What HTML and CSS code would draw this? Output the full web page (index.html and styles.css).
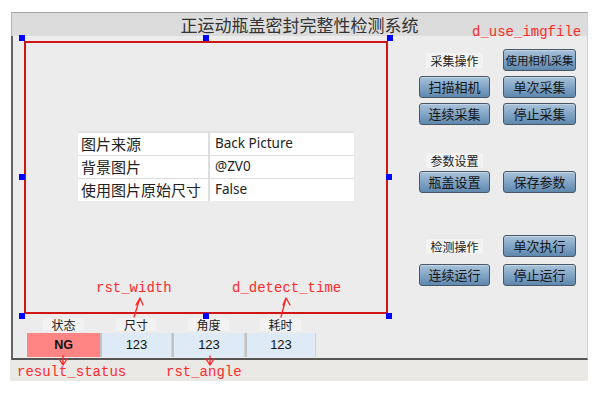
FILE: index.html
```html
<!DOCTYPE html>
<html>
<head>
<meta charset="utf-8">
<link rel="stylesheet" href="styles.css">
</head>
<body>
<div class="screen">
  <div class="window">
    <div class="titlebar">正运动瓶盖密封完整性检测系统</div>
    <div class="body">
      <div class="main">
        <div class="roi">
          <span class="h h-tl"></span><span class="h h-tm"></span><span class="h h-tr"></span>
          <span class="h h-ml"></span><span class="h h-mr"></span>
          <span class="h h-bl"></span><span class="h h-bm"></span><span class="h h-br"></span>
          <div class="props">
            <div class="prow"><div class="k">图片来源</div><div class="v">Back Picture</div></div>
            <div class="prow"><div class="k">背景图片</div><div class="v">@ZV0</div></div>
            <div class="prow"><div class="k">使用图片原始尺寸</div><div class="v">False</div></div>
          </div>
        </div>
        <div class="results">
          <div class="res"><span class="lbl">状态</span><div class="val ng">NG</div></div>
          <div class="res"><span class="lbl">尺寸</span><div class="val">123</div></div>
          <div class="res"><span class="lbl">角度</span><div class="val">123</div></div>
          <div class="res"><span class="lbl">耗时</span><div class="val">123</div></div>
        </div>
      </div>
      <div class="side">
        <div class="grp g1">
          <span class="glabel">采集操作</span>
          <button class="btn small">使用相机采集</button>
          <button class="btn">扫描相机</button>
          <button class="btn">单次采集</button>
          <button class="btn">连续采集</button>
          <button class="btn">停止采集</button>
        </div>
        <div class="grp g2">
          <span class="glabel">参数设置</span>
          <span></span>
          <button class="btn">瓶盖设置</button>
          <button class="btn">保存参数</button>
        </div>
        <div class="grp g3">
          <span class="glabel">检测操作</span>
          <button class="btn">单次执行</button>
          <button class="btn">连续运行</button>
          <button class="btn">停止运行</button>
        </div>
      </div>
    </div>
  </div>
  <div class="band"></div>

  <span class="note n-img">d_use_imgfile</span>
  <span class="note n-width">rst_width</span>
  <span class="note n-time">d_detect_time</span>
  <span class="note n-status">result_status</span>
  <span class="note n-angle">rst_angle</span>

  <svg class="arrows" width="598" height="396" viewBox="0 0 598 396">
    <g fill="none" stroke="#ff2020" stroke-width="1.3" stroke-linecap="round" stroke-linejoin="round">
      <path d="M134 317 L140 298 M136 305 L140 298 L143 305"/>
      <path d="M281 317 L286 298 M283 305 L286 298 L290 305"/>
      <path d="M63 356 L63 365 M59 359 L63 365 L67 359"/>
      <path d="M210 356 L210 365 M206 359 L210 365 L214 359"/>
    </g>
  </svg>
</div>
</body>
</html>
```

FILE: styles.css
```css
html, body {
  margin: 0;
  padding: 0;
  background: #ffffff;
}

.screen {
  position: relative;
  width: 598px;
  height: 396px;
  box-sizing: border-box;
  padding: 12px 0 0 11px;
  font-family: "Noto Sans CJK SC", "Noto Sans", sans-serif;
  overflow: hidden;
}

.window {
  width: 577px;
}

.titlebar {
  height: 23px;
  border-top: 1px solid #a3a3a3;
  border-left: 1px solid #b4b4b4;
  border-right: 1px solid #d4d4d4;
  background: #dcdcdc;
  text-align: center;
  font-size: 17px;
  line-height: 24px;
  color: #333;
}

.body {
  display: flex;
  height: 322px;
  border-left: 2px solid #646464;
  border-bottom: 2px solid #555555;
  border-right: 1px solid #d4d4d4;
  background: #ececec;
}

.main {
  padding: 5px 0 0 11px;
}

.roi {
  position: relative;
  box-sizing: border-box;
  width: 364px;
  height: 273px;
  border: 2px solid #d01515;
  padding: 88px 0 0 52px;
}

.h {
  position: absolute;
  width: 6px;
  height: 6px;
  background: #0000ff;
}
.h-tl { left: -7px; top: -8px; }
.h-tm { left: 177px; top: -8px; }
.h-tr { left: 361px; top: -8px; }
.h-ml { left: -7px; top: 131px; }
.h-mr { left: 360px; top: 131px; }
.h-bl { left: -7px; top: 270px; }
.h-bm { left: 177px; top: 270px; }
.h-br { left: 360px; top: 270px; }

.props {
  width: 276px;
  border-top: 2px solid #e2e2e2;
  background: #ffffff;
}

.prow {
  display: grid;
  grid-template-columns: 132px 1fr;
  height: 22px;
  border-bottom: 1px solid #dedede;
}
.prow:last-child { border-bottom: none; }

.k {
  font-size: 15px;
  line-height: 21px;
  padding-left: 3px;
  color: #222;
  border-right: 2px solid #dedede;
}

.v {
  font-family: "Noto Sans", sans-serif;
  font-size: 13.5px;
  line-height: 21px;
  padding-left: 5px;
  color: #222;
}

.results {
  display: grid;
  grid-template-columns: 73px 72px 73px 71px;
  margin: 4px 0 0 3px;
}

.res {
  display: flex;
  flex-direction: column;
  align-items: center;
}

.lbl {
  height: 13px;
  padding: 0 8px;
  margin-bottom: 2px;
  background: #f2f2f2;
  font-size: 12px;
  line-height: 13px;
  color: #222;
}

.val {
  align-self: stretch;
  height: 24px;
  box-sizing: border-box;
  background: #deebf7;
  border-left: 2px solid #c2c2c2;
  border-right: 1px solid #d2d2d2;
  text-align: center;
  font-family: "Liberation Sans", sans-serif;
  font-size: 13px;
  line-height: 24px;
  color: #111;
}

.val.ng {
  background: #ff8585;
  border: none;
  font-weight: bold;
  font-size: 12.5px;
}

.side {
  padding: 13px 0 0 31px;
}

.grp {
  display: grid;
  grid-template-columns: 71px 73px;
  column-gap: 13px;
  row-gap: 5px;
  grid-auto-rows: 22px;
  align-items: center;
}

.g2 {
  margin-top: 26px;
  grid-template-rows: 18px 22px;
  row-gap: 2px;
}

.g3 {
  margin-top: 42px;
  row-gap: 7px;
}

.glabel {
  justify-self: center;
  padding: 0 4px;
  height: 15px;
  background: #f3f3f3;
  font-size: 12px;
  line-height: 15px;
  color: #222;
}

.btn {
  height: 22px;
  margin: 0;
  padding: 0;
  box-sizing: border-box;
  border: 1px solid #4a5866;
  border-radius: 3px;
  background: linear-gradient(#a9c3da 0%, #86a8c8 45%, #5f88ae 100%);
  box-shadow: inset 0 1px 0 rgba(255, 255, 255, 0.3);
  font-family: "Noto Sans CJK SC", sans-serif;
  font-size: 13px;
  line-height: 20px;
  color: #151515;
  white-space: nowrap;
}

.btn.small {
  font-size: 11.5px;
  letter-spacing: -0.2px;
}

.band {
  width: 578px;
  height: 21px;
  margin-left: -1px;
  background: #ebe9e6;
}

.note {
  position: absolute;
  font-family: "Liberation Mono", monospace;
  font-size: 14px;
  line-height: 16px;
  color: #ff2a2a;
  white-space: nowrap;
}
.n-img { left: 472px; top: 24px; }
.n-width { left: 96px; top: 280px; }
.n-time { left: 232px; top: 280px; }
.n-status { left: 17px; top: 364px; }
.n-angle { left: 166px; top: 364px; }

.arrows {
  position: absolute;
  left: 0;
  top: 0;
  pointer-events: none;
}
```
